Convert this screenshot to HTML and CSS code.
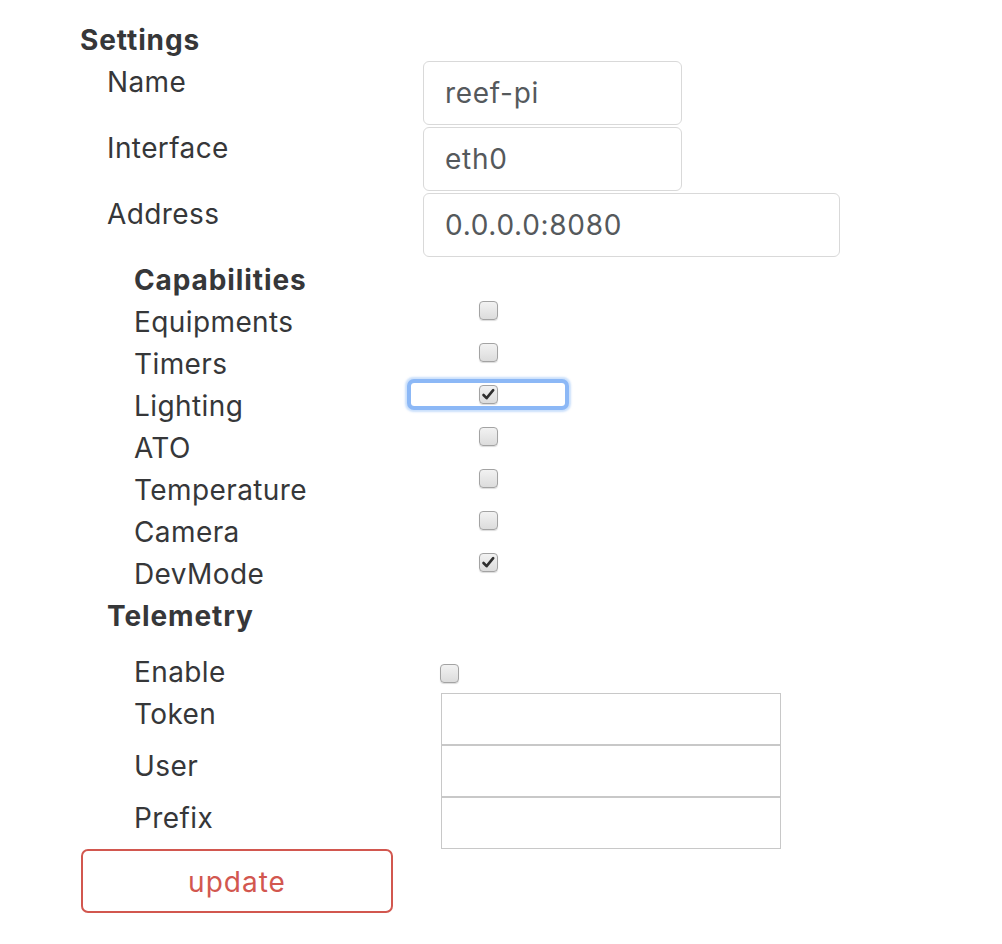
FILE: index.html
```html
<!DOCTYPE html>
<html>
<head>
<meta charset="utf-8">
<link rel="stylesheet" href="styles.css">
</head>
<body>
<div class="page">
  <div class="title">Settings</div>

  <div class="field-row">
    <div class="label">Name</div>
    <div class="text-input short">reef-pi</div>
  </div>
  <div class="field-row">
    <div class="label">Interface</div>
    <div class="text-input short">eth0</div>
  </div>
  <div class="field-row">
    <div class="label">Address</div>
    <div class="text-input long">0.0.0.0:8080</div>
  </div>

  <div class="caps">
    <div class="section-title">Capabilities</div>
    <div class="cap-row"><span class="cap-label">Equipments</span><span class="cap-cell"><span class="box"></span></span></div>
    <div class="cap-row"><span class="cap-label">Timers</span><span class="cap-cell"><span class="box"></span></span></div>
    <div class="cap-row"><span class="cap-label">Lighting</span><span class="cap-cell focused"><span class="box checked"><svg viewBox="0 0 19 19" width="19" height="19"><path d="M4.5 10 L7.6 13.2 L14.2 5.2" fill="none" stroke="#2f2f2f" stroke-width="2.6" stroke-linecap="round" stroke-linejoin="round"/></svg></span></span></div>
    <div class="cap-row"><span class="cap-label">ATO</span><span class="cap-cell"><span class="box"></span></span></div>
    <div class="cap-row"><span class="cap-label">Temperature</span><span class="cap-cell"><span class="box"></span></span></div>
    <div class="cap-row"><span class="cap-label">Camera</span><span class="cap-cell"><span class="box"></span></span></div>
    <div class="cap-row"><span class="cap-label">DevMode</span><span class="cap-cell"><span class="box checked"><svg viewBox="0 0 19 19" width="19" height="19"><path d="M4.5 10 L7.6 13.2 L14.2 5.2" fill="none" stroke="#2f2f2f" stroke-width="2.6" stroke-linecap="round" stroke-linejoin="round"/></svg></span></span></div>
  </div>

  <div class="section-title tele-title">Telemetry</div>
  <div class="tele">
    <div class="tele-row enable-row"><span class="tele-label enable-label">Enable</span><span class="tele-cell"><span class="box"></span></span></div>
    <div class="tele-row"><span class="tele-label">Token</span><span class="plain-input"></span></div>
    <div class="tele-row"><span class="tele-label">User</span><span class="plain-input"></span></div>
    <div class="tele-row"><span class="tele-label">Prefix</span><span class="plain-input"></span></div>
  </div>

  <button class="update">update</button>
</div>
</body>
</html>
```
FILE: styles.css
```css
html, body {
  margin: 0;
  padding: 0;
  background: #ffffff;
}
body {
  font-family: Inter, "Open Sans", "Liberation Sans", sans-serif;
  font-size: 28px;
  line-height: 40px;
  letter-spacing: 0.4px;
  color: #363739;
}
.page {
  padding: 20px 0 0 80px;
  display: flex;
  flex-direction: column;
  align-items: flex-start;
}
.title {
  font-weight: 700;
  letter-spacing: 0.9px;
  line-height: 40px;
  height: 40px;
  margin-bottom: 1px;
}
.field-row {
  display: flex;
  align-items: flex-start;
  margin-left: 27px;
  margin-bottom: 2px;
}
.label {
  width: 316px;
  line-height: 40px;
  padding-top: 1px;
}
.text-input {
  box-sizing: border-box;
  height: 64px;
  border: 1px solid #d9d9d9;
  border-radius: 6px;
  padding: 0 21px 1px;
  display: flex;
  align-items: center;
  color: #55595c;
  font-size: 28px;
  letter-spacing: 0.7px;
}
.text-input.short { width: 259px; }
.text-input.long { width: 417px; }

.caps {
  margin-left: 54px;
  margin-top: -1px;
  display: flex;
  flex-direction: column;
}
.section-title {
  font-weight: 700;
  letter-spacing: 0.9px;
  line-height: 40px;
  padding-top: 2px;
  height: 42px;
  box-sizing: border-box;
}
.cap-row {
  display: flex;
  align-items: flex-start;
  height: 42px;
  line-height: 40px;
}
.cap-label {
  width: 277px;
  padding-top: 2px;
}
.cap-cell {
  box-sizing: border-box;
  width: 154px;
  height: 23px;
  margin-top: -1px;
  display: flex;
  align-items: center;
  justify-content: center;
  border-radius: 2px;
}
.cap-cell.focused {
  box-shadow: 0 0 0 4px #8cb8f6, 0 0 2px 6px rgba(160, 198, 248, 0.55);
  border-radius: 3px;
}
.box {
  box-sizing: border-box;
  width: 19px;
  height: 19px;
  border: 1px solid #a3a3a3;
  border-radius: 4px;
  background: linear-gradient(#f2f2f2, #dcdcdc);
  box-shadow: 0 1px 1px rgba(0,0,0,0.14);
  display: flex;
  align-items: center;
  justify-content: center;
  position: relative;
}
.box svg {
  position: absolute;
  left: -1px;
  top: -1px;
}
.tele-title {
  margin-left: 27px;
}
.tele {
  margin-left: 54px;
  margin-top: 14px;
  display: flex;
  flex-direction: column;
}
.tele-row {
  display: flex;
  align-items: flex-start;
  line-height: 40px;
}
.enable-row {
  height: 43px;
}
.tele-label {
  width: 307px;
  padding-top: 1px;
}
.enable-label {
  padding-top: 2px;
}
.tele-cell {
  padding-top: 14px;
  margin-left: -1px;
  display: flex;
}
.plain-input {
  box-sizing: border-box;
  width: 340px;
  height: 52px;
  border: 1px solid #c8c8c8;
  background: #fff;
}
.update {
  margin-left: 1px;
  box-sizing: border-box;
  width: 312px;
  height: 64px;
  border: 2px solid #d2574f;
  border-radius: 7px;
  background: #fff;
  color: #d2574f;
  font-family: Inter, "Open Sans", "Liberation Sans", sans-serif;
  font-size: 28px;
  letter-spacing: 1px;
  padding: 2px 0 0;
}
```
